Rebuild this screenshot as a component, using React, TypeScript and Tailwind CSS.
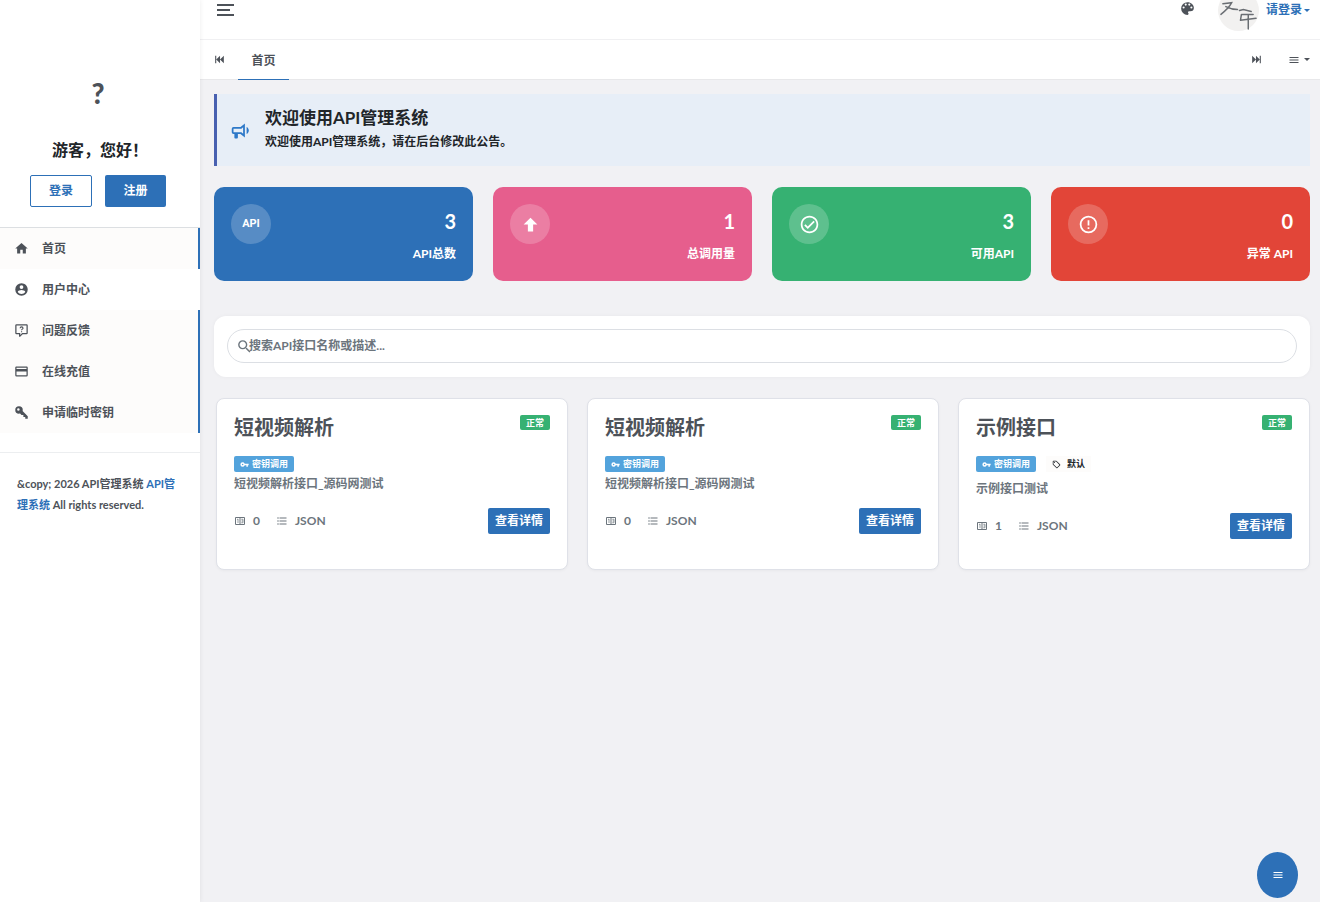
import { ReactNode } from "react";
import clsx from "clsx";

const icons = {
  home: "M10,20V14H14V20H19V12H22L12,3L2,12H5V20H10Z",
  account:
    "M12,19.2C9.5,19.2 7.29,17.92 6,16C6.03,14 10,12.9 12,12.9C14,12.9 17.97,14 18,16C16.71,17.92 14.5,19.2 12,19.2M12,5A3,3 0 0,1 15,8A3,3 0 0,1 12,11A3,3 0 0,1 9,8A3,3 0 0,1 12,5M12,2A10,10 0 0,0 2,12A10,10 0 0,0 12,22A10,10 0 0,0 22,12C22,6.47 17.5,2 12,2Z",
  comment:
    "M4,2A2,2 0 0,0 2,4V16A2,2 0 0,0 4,18H8V21A1,1 0 0,0 9,22H9.5C9.75,22 10,21.9 10.2,21.71L13.9,18H20A2,2 0 0,0 22,16V4C22,2.89 21.1,2 20,2H4M4,4H20V16H13.08L10,19.08V16H4V4Z",
  card: "M20,8H4V6H20M20,18H4V12H20M20,4H4C2.89,4 2,4.89 2,6V18A2,2 0 0,0 4,20H20A2,2 0 0,0 22,18V6C22,4.89 21.1,4 20,4Z",
  keyVariant:
    "M22,18V22H18V19H15V16H12L9.74,13.74C9.19,13.91 8.61,14 8,14A6,6 0 0,1 2,8A6,6 0 0,1 8,2A6,6 0 0,1 14,8C14,8.61 13.91,9.19 13.74,9.74L22,18M7,5A2,2 0 0,0 5,7A2,2 0 0,0 7,9A2,2 0 0,0 9,7A2,2 0 0,0 7,5Z",
  key: "M7,14A2,2 0 0,1 5,12A2,2 0 0,1 7,10A2,2 0 0,1 9,12A2,2 0 0,1 7,14M12.65,10C11.83,7.67 9.61,6 7,6A6,6 0 0,0 1,12A6,6 0 0,0 7,18C9.61,18 11.83,16.33 12.65,14H17V18H21V14H23V10H12.65Z",
  bullhorn:
    "M12,8H4A2,2 0 0,0 2,10V14A2,2 0 0,0 4,16H5V20A1,1 0 0,0 6,21H8A1,1 0 0,0 9,20V16H12L17,20V4L12,8M15,15.6L13,14H4V10H13L15,8.4V15.6M21.5,12C21.5,13.71 20.54,15.26 19,16V8C20.53,8.75 21.5,10.3 21.5,12Z",
  palette:
    "M17.5,12A1.5,1.5 0 0,1 16,10.5A1.5,1.5 0 0,1 17.5,9A1.5,1.5 0 0,1 19,10.5A1.5,1.5 0 0,1 17.5,12M14.5,8A1.5,1.5 0 0,1 13,6.5A1.5,1.5 0 0,1 14.5,5A1.5,1.5 0 0,1 16,6.5A1.5,1.5 0 0,1 14.5,8M9.5,8A1.5,1.5 0 0,1 8,6.5A1.5,1.5 0 0,1 9.5,5A1.5,1.5 0 0,1 11,6.5A1.5,1.5 0 0,1 9.5,8M6.5,12A1.5,1.5 0 0,1 5,10.5A1.5,1.5 0 0,1 6.5,9A1.5,1.5 0 0,1 8,10.5A1.5,1.5 0 0,1 6.5,12M12,3A9,9 0 0,0 3,12A9,9 0 0,0 12,21A1.5,1.5 0 0,0 13.5,19.5C13.5,19.11 13.35,18.76 13.11,18.5C12.88,18.23 12.73,17.88 12.73,17.5A1.5,1.5 0 0,1 14.23,16H16A5,5 0 0,0 21,11C21,6.58 16.97,3 12,3Z",
  skipBack: "M20,5V19L13,12M6,5V19H4V5M13,5V19L6,12",
  skipForward: "M4,5V19L11,12M18,5V19H20V5M11,5V19L18,12",
  menu: "M3,6H21V8H3V6M3,11H21V13H3V11M3,16H21V18H3V16Z",
  arrowUp: "M15,20H9V12H4.16L12,4.16L19.84,12H15V20Z",
  check:
    "M12,2C6.5,2 2,6.5 2,12S6.5,22 12,22 22,17.5 22,12 17.5,2 12,2M12,20C7.59,20 4,16.41 4,12S7.59,4 12,4 20,7.59 20,12 16.41,20 12,20M16.59,7.58L10,14.17L7.41,11.59L6,13L10,17L18,9L16.59,7.58Z",
  alert:
    "M11,15H13V17H11V15M11,7H13V13H11V7M12,2C6.47,2 2,6.5 2,12A10,10 0 0,0 12,22A10,10 0 0,0 22,12A10,10 0 0,0 12,2M12,20A8,8 0 0,1 4,12A8,8 0 0,1 12,4A8,8 0 0,1 20,12A8,8 0 0,1 12,20Z",
  search:
    "M9.5,3A6.5,6.5 0 0,1 16,9.5C16,11.11 15.41,12.59 14.44,13.73L14.71,14H15.5L20.5,19L19,20.5L14,15.5V14.71L13.73,14.44C12.59,15.41 11.11,16 9.5,16A6.5,6.5 0 0,1 3,9.5A6.5,6.5 0 0,1 9.5,3M9.5,5C7,5 5,7 5,9.5C5,12 7,14 9.5,14C12,14 14,12 14,9.5C14,7 12,5 9.5,5Z",
  tag: "M21.41,11.58L12.41,2.58A2,2 0 0,0 11,2H4A2,2 0 0,0 2,4V11A2,2 0 0,0 2.59,12.42L11.59,21.42A2,2 0 0,0 13,22A2,2 0 0,0 14.41,21.41L21.41,14.41A2,2 0 0,0 22,13A2,2 0 0,0 21.41,11.58M13,20L4,11V4H11L20,13M6.5,5A1.5,1.5 0 1,1 5,6.5A1.5,1.5 0 0,1 6.5,5Z",
  counter:
    "M4,4H20A2,2 0 0,1 22,6V18A2,2 0 0,1 20,20H4A2,2 0 0,1 2,18V6A2,2 0 0,1 4,4M4,6V18H11V6H4M13,6V18H20V6H13Z",
  list: "M7,5H21V7H7V5M7,13V11H21V13H7M4,4.5A1.5,1.5 0 0,1 5.5,6A1.5,1.5 0 0,1 4,7.5A1.5,1.5 0 0,1 2.5,6A1.5,1.5 0 0,1 4,4.5M4,10.5A1.5,1.5 0 0,1 5.5,12A1.5,1.5 0 0,1 4,13.5A1.5,1.5 0 0,1 2.5,12A1.5,1.5 0 0,1 4,10.5M7,19V17H21V19H7M4,16.5A1.5,1.5 0 0,1 5.5,18A1.5,1.5 0 0,1 4,19.5A1.5,1.5 0 0,1 2.5,18A1.5,1.5 0 0,1 4,16.5Z",
};

type IconName = keyof typeof icons;

function Icon({ name, className }: { name: IconName; className?: string }) {
  return (
    <svg
      viewBox="0 0 24 24"
      fill="currentColor"
      fillRule="evenodd"
      aria-hidden="true"
      className={clsx("shrink-0", className)}
    >
      <path d={icons[name]} />
      {name === "comment" && (
        <path
          d="M9.8,8.2C9.8,5.6 14.4,5.6 14.4,8.2C14.4,9.8 12.1,9.8 12.1,11.6M12.1,13V14.8"
          fill="none"
          stroke="currentColor"
          strokeWidth="1.8"
        />
      )}
      {name === "counter" && (
        <path
          d="M6,9L8,8V16M14.5,8.5H18V15.5H14.5M15,12H18"
          fill="none"
          stroke="currentColor"
          strokeWidth="1.4"
        />
      )}
    </svg>
  );
}

function Caret() {
  return (
    <svg viewBox="0 0 6 3" fill="currentColor" className="h-[3px] w-[6px]">
      <path d="M0,0H6L3,3Z" />
    </svg>
  );
}

const menus: { icon: IconName; text: string; plain?: boolean }[] = [
  { icon: "home", text: "首页" },
  { icon: "account", text: "用户中心", plain: true },
  { icon: "comment", text: "问题反馈" },
  { icon: "card", text: "在线充值" },
  { icon: "keyVariant", text: "申请临时密钥" },
];

const apis = [
  { title: "短视频解析", desc: "短视频解析接口_源码网测试", count: 0 },
  { title: "短视频解析", desc: "短视频解析接口_源码网测试", count: 0 },
  { title: "示例接口", desc: "示例接口测试", count: 1, tag: "默认" },
];

function Sidebar() {
  return (
    <aside className="z-10 flex w-[200px] shrink-0 flex-col bg-white shadow-[0_0_5px_rgba(0,0,0,0.08)]">
      <div className="flex flex-col items-center border-b border-[#dcdfe2] pt-[72px] pb-5">
        <span className="mr-1 text-[28px] leading-[42px] font-black">?</span>
        <p className="mt-6 text-base leading-6 text-[#212529]">游客，您好！</p>
        <div className="mt-[13px] mr-1 flex gap-[13px]">
          <button className="h-8 w-[62px] rounded-[2px] border border-[#2d70b7] bg-white text-[#2d70b7]">
            登录
          </button>
          <button className="h-8 w-[61px] rounded-[2px] bg-[#2d70b7] text-white">
            注册
          </button>
        </div>
      </div>

      <nav className="border-b border-[#eceef0] pb-[19px]">
        {menus.map((item) => (
          <a
            key={item.text}
            href="#"
            className={clsx(
              "flex h-[41px] items-center gap-[13px] border-r-2 pl-[14px]",
              item.plain
                ? "border-transparent"
                : "border-[#2d70b7] bg-[#fdfcfb]",
            )}
          >
            <Icon name={item.icon} className="size-[15px]" />
            {item.text}
          </a>
        ))}
      </nav>

      <p className="pt-5 pr-5 pl-[17px] text-[11px] leading-[21px]">
        &amp;copy; 2026 API管理系统{" "}
        <a href="#" className="text-[#2d70b7]">
          API管理系统
        </a>{" "}
        All rights reserved.
      </p>
    </aside>
  );
}

function Topbar() {
  return (
    <header className="h-10 overflow-hidden border-b border-[#f0f0f2] bg-white">
      <div className="-mt-3 flex h-11 items-center pr-[10px] pl-[17px]">
        <button aria-label="切换菜单" className="flex flex-col gap-[3px]">
          <span className="h-[2px] w-[17px] bg-[#4d5259]" />
          <span className="h-[2px] w-[13px] bg-[#4d5259]" />
          <span className="h-[2px] w-[17px] bg-[#4d5259]" />
        </button>
        <button aria-label="主题" className="mr-[22px] mb-1 ml-auto">
          <Icon name="palette" className="size-[17px]" />
        </button>
        <a href="#" className="flex items-center text-[#2d70b7]">
          <svg viewBox="0 0 42 42" className="mr-[7px] size-[41px]">
            <circle cx="21" cy="21" r="21" fill="#f2f1f0" />
            <path
              d="M5,14L14,13C12,17 8,21 3,25M8,17C12,19 16,20 20,20M22,21L26,20L34,22M25,25H36M23,31L24,25M23,31L39,29M31,25V40"
              fill="none"
              stroke="#6a6e73"
              strokeWidth="1.5"
              strokeLinecap="round"
            />
          </svg>
          <span className="mr-[2px]">请登录</span>
          <Caret />
        </a>
      </div>
    </header>
  );
}

function Tabs() {
  return (
    <div className="flex h-10 items-center border-b border-[#e8e8ea] bg-white pr-[10px] pl-[13px]">
      <button aria-label="向左">
        <Icon name="skipBack" className="size-[13px]" />
      </button>
      <a
        href="#"
        className="-mb-px ml-3 flex h-10 w-[51px] items-center justify-center border-b border-[#2d70b7] pt-[2px]"
      >
        首页
      </a>
      <button aria-label="向右" className="mr-[25px] ml-auto">
        <Icon name="skipForward" className="size-[13px]" />
      </button>
      <button aria-label="标签操作" className="flex items-center gap-1">
        <Icon name="menu" className="size-3" />
        <Caret />
      </button>
    </div>
  );
}

type StatProps = {
  color: string;
  icon: ReactNode;
  value: number;
  label: string;
};

function Stat({ color, icon, value, label }: StatProps) {
  return (
    <div
      className={clsx(
        "flex h-[94px] justify-between rounded-[10px] p-[17px] text-white",
        color,
      )}
    >
      <div className="flex size-10 items-center justify-center rounded-full bg-white/20">
        {icon}
      </div>
      <div className="flex flex-col items-end">
        <span className="text-xl leading-[34px]">{value}</span>
        <span className="mt-[7px] leading-[18px]">{label}</span>
      </div>
    </div>
  );
}

function ApiCard({ title, desc, count, tag }: (typeof apis)[number]) {
  return (
    <div className="flex h-[172px] flex-col rounded-lg border border-[#dfe1e8] bg-white px-[17px] pt-4 shadow-[0_1px_3px_rgba(0,0,0,0.04)]">
      <div className="flex justify-between">
        <h3 className="text-xl leading-6">{title}</h3>
        <span className="h-[15px] rounded-[2px] bg-[#36b172] px-[6px] text-[9px] leading-[15px] text-white">
          正常
        </span>
      </div>
      <div className="mt-[17px] flex gap-[10px] text-[9px] leading-4">
        <span className="flex items-center gap-[3px] rounded-[2px] bg-[#53a3dc] px-[6px] text-white">
          <Icon name="key" className="size-[9px]" />
          密钥调用
        </span>
        {tag && (
          <span className="flex items-center gap-[6px] bg-[#fdfcfb] px-[6px] text-[#212529]">
            <Icon name="tag" className="size-[9px]" />
            {tag}
          </span>
        )}
      </div>
      <p className={clsx("leading-[18px] text-[#6c757d]", tag ? "mt-2" : "mt-[3px]")}>
        {desc}
      </p>
      <div className="mt-[15px] flex items-center text-[#6c757d]">
        <Icon name="counter" className="mr-[7px] size-3" />
        {count}
        <Icon name="list" className="mr-[7px] ml-4 size-3" />
        JSON
        <button className="ml-auto h-[26px] rounded-[2px] bg-[#2d70b7] px-[7px] text-white">
          查看详情
        </button>
      </div>
    </div>
  );
}

export default function App() {
  return (
    <div className="flex min-h-screen bg-[#f1f1f4] font-[Lato,'Noto_Sans_CJK_SC',sans-serif] text-xs font-bold text-[#4d5259]">
      <Sidebar />
      <div className="min-w-0 flex-1">
        <Topbar />
        <Tabs />

        <main className="pt-[14px] pr-[10px] pl-[14px]">
          <div className="flex h-[72px] items-center border-l-[3px] border-[#4860b0] bg-[#e7eef7] pl-[13px] text-[#212529]">
            <Icon name="bullhorn" className="mr-[14px] size-[21px] text-[#2d78c8]" />
            <div>
              <h4 className="text-[17px] leading-6">欢迎使用API管理系统</h4>
              <p className="leading-6">欢迎使用API管理系统，请在后台修改此公告。</p>
            </div>
          </div>

          {/* 统计 */}
          <div className="mt-[21px] grid grid-cols-4 gap-5">
            <Stat
              color="bg-[#2d70b7]"
              icon={<span className="font-[Roboto,sans-serif] text-[11px]">API</span>}
              value={3}
              label="API总数"
            />
            <Stat
              color="bg-[#e65e8d]"
              icon={<Icon name="arrowUp" className="size-[21px]" />}
              value={1}
              label="总调用量"
            />
            <Stat
              color="bg-[#36b172]"
              icon={<Icon name="check" className="size-[21px]" />}
              value={3}
              label="可用API"
            />
            <Stat
              color="bg-[#e24538]"
              icon={<Icon name="alert" className="size-[21px]" />}
              value={0}
              label="异常 API"
            />
          </div>

          {/* 搜索 */}
          <div className="mt-[35px] rounded-xl bg-white px-[13px] pt-[13px] pb-[14px] shadow-[0_0_4px_rgba(0,0,0,0.04)]">
            <label className="flex h-[34px] items-center rounded-full border border-[#dcdfe4] pl-2 text-[#6c757d]">
              <Icon name="search" className="-mr-1 size-[17px]" />
              <input
                type="text"
                aria-label="搜索"
                placeholder="搜索API接口名称或描述..."
                className="min-w-0 flex-1 bg-transparent outline-none placeholder:text-[#6c757d]"
              />
            </label>
          </div>

          {/* 接口列表 */}
          <div className="mt-[21px] ml-[2px] grid grid-cols-3 gap-[19px]">
            {apis.map((api, i) => (
              <ApiCard key={i} {...api} />
            ))}
          </div>
        </main>
      </div>

      <button
        aria-label="菜单"
        className="fixed right-[22px] bottom-1 flex h-[46px] w-[41px] items-center justify-center rounded-[50%] bg-[#2d70b7] text-white"
      >
        <Icon name="menu" className="size-3" />
      </button>
    </div>
  );
}
